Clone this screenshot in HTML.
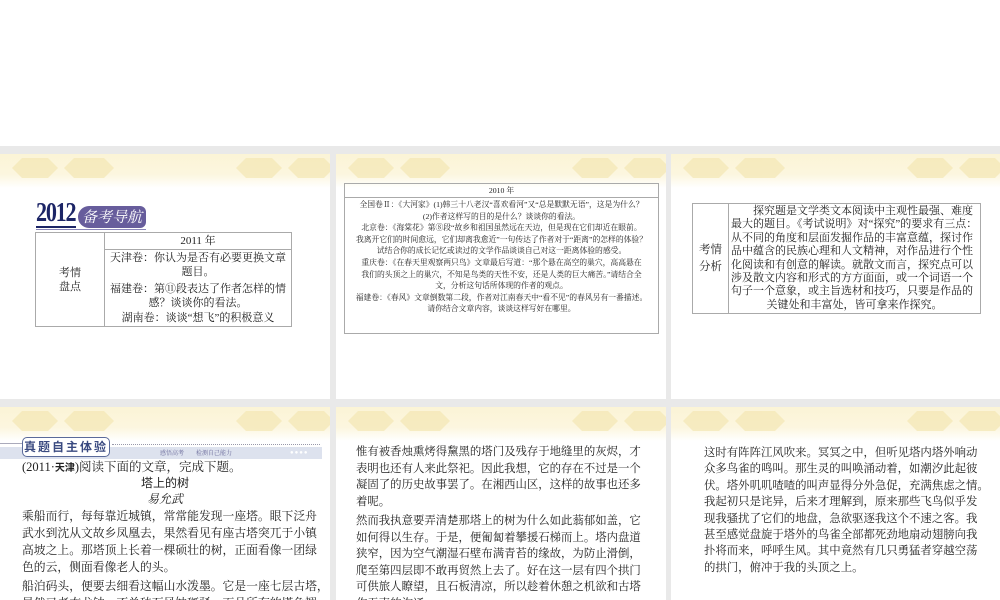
<!DOCTYPE html>
<html><head><meta charset="utf-8"><style>
*{margin:0;padding:0;box-sizing:border-box}
body{width:1000px;height:600px;background:#fff;position:relative;overflow:hidden;font-family:"Liberation Serif","Noto Serif CJK SC","Noto Sans CJK SC",serif;color:#222}
.bg{position:absolute;left:0;top:146px;width:1000px;height:454px;background:#e9e9e9}
.s{position:absolute;background:#fff;overflow:hidden}
.hd{position:absolute;left:0;top:0;width:100%;height:34px;background:linear-gradient(180deg,#fbf4d6 0%,#fcf6df 60%,#fff 100%)}
.hd svg{position:absolute;left:0;top:0}
table{border-collapse:collapse;position:absolute}
td{border:1px solid #aaa;text-align:center;vertical-align:middle;white-space:nowrap}
.p{position:absolute;white-space:nowrap}
</style></head><body>
<div class="bg"></div>

<div class="s" style="left:0;top:154px;width:330px;height:245px">
 <div class="hd"><svg width="330" height="34"><g fill="#f4e7b4" opacity=".7"><polygon points="12,14 22,4 48,4 58,14 48,24 22,24"/><polygon points="64,14 74,4 104,4 114,14 104,24 74,24"/><polygon points="236,14 246,4 272,4 282,14 272,24 246,24"/><polygon points="288,14 298,4 324,4 334,14 324,24 298,24"/></g></svg></div>
 <div style="position:absolute;left:36px;top:44px;font:bold 27px/28px 'Liberation Serif',serif;color:#1c2566;letter-spacing:-1.5px;transform:scaleX(.82);transform-origin:left">2012</div>
 <div style="position:absolute;left:36px;top:72px;width:40px;height:2px;background:#1c2566"></div>
 <div style="position:absolute;left:36px;top:75px;width:110px;height:1px;background:#8a86b8"></div>
 <div style="position:absolute;left:78px;top:52px;width:68px;height:22px;background:#675d9c;border-radius:11px 6px 6px 11px;color:#fff;font:italic 15px/22px 'Noto Serif CJK SC',serif;text-align:center">备考导航</div>
 <table style="left:35px;top:78px;width:257px;font-size:11px;line-height:14px">
  <tr><td rowspan="2" style="width:69px">考情<br>盘点</td><td style="height:17px">2011 年</td></tr>
  <tr><td style="padding:1px 2px 1px">天津卷：你认为是否有必要更换文章<br>题目。<div style="height:3px"></div>福建卷：第⑪段表达了作者怎样的情<br>感？谈谈你的看法。<div style="height:1px"></div>湖南卷：谈谈“想飞”的积极意义</td></tr>
 </table>
</div>

<div class="s" style="left:336px;top:154px;width:330px;height:245px">
 <div class="hd"><svg width="330" height="34"><g fill="#f4e7b4" opacity=".7"><polygon points="12,14 22,4 48,4 58,14 48,24 22,24"/><polygon points="64,14 74,4 104,4 114,14 104,24 74,24"/><polygon points="236,14 246,4 272,4 282,14 272,24 246,24"/><polygon points="288,14 298,4 324,4 334,14 324,24 298,24"/></g></svg></div>
 <table style="left:8px;top:29px;width:315px;height:151px;font-size:7.8px;line-height:11.6px">
  <tr><td style="height:14px">2010 年</td></tr>
  <tr><td style="vertical-align:top;padding:1px 1px">全国卷Ⅱ：《大河家》(1)韩三十八老汉“喜欢看河”又“总是默默无语”，这是为什么？<br>(2)作者这样写的目的是什么？谈谈你的看法。<br>北京卷：《海棠花》第⑧段“故乡和祖国虽然远在天边，但是现在它们却近在眼前。<br>我离开它们的时间愈远，它们却离我愈近”一句传达了作者对于“距离”的怎样的体验？<br>试结合你的成长记忆或读过的文学作品谈谈自己对这一距离体验的感受。<br>重庆卷：《在春天里观察两只鸟》文章最后写道：“那个悬在高空的巢穴，高高悬在<br>我们的头顶之上的巢穴，不知是鸟类的天性不安，还是人类的巨大痛苦。”请结合全<br>文，分析这句话所体现的作者的观点。<br>福建卷：《春风》文章倒数第二段，作者对江南春天中“看不见”的春风另有一番描述。<br>请你结合文章内容，谈谈这样写好在哪里。</td></tr>
 </table>
</div>

<div class="s" style="left:671px;top:154px;width:329px;height:245px">
 <div class="hd"><svg width="330" height="34"><g fill="#f4e7b4" opacity=".7"><polygon points="12,14 22,4 48,4 58,14 48,24 22,24"/><polygon points="64,14 74,4 104,4 114,14 104,24 74,24"/><polygon points="236,14 246,4 272,4 282,14 272,24 246,24"/><polygon points="288,14 298,4 324,4 334,14 324,24 298,24"/></g></svg></div>
 <table style="left:21px;top:49px;width:289px;height:110px;font-size:11px;line-height:13.4px">
  <tr><td style="width:36px;font-size:11.5px;line-height:17px">考情<br>分析</td><td style="padding:1px 2px;text-align:left">　　探究题是文学类文本阅读中主观性最强、难度<br>最大的题目。《考试说明》对“探究”的要求有三点：<br>从不同的角度和层面发掘作品的丰富意蕴，探讨作<br>品中蕴含的民族心理和人文精神，对作品进行个性<br>化阅读和有创意的解读。就散文而言，探究点可以<br>涉及散文内容和形式的方方面面，或一个词语一个<br>句子一个意象，或主旨选材和技巧，只要是作品的<br><span style="display:block;text-align:center">关键处和丰富处，皆可拿来作探究。</span></td></tr>
 </table>
</div>

<div class="s" style="left:0;top:407px;width:330px;height:193px">
 <div class="hd"><svg width="330" height="34"><g fill="#f4e7b4" opacity=".7"><polygon points="12,14 22,4 48,4 58,14 48,24 22,24"/><polygon points="64,14 74,4 104,4 114,14 104,24 74,24"/><polygon points="236,14 246,4 272,4 282,14 272,24 246,24"/><polygon points="288,14 298,4 324,4 334,14 324,24 298,24"/></g></svg></div>
 <div style="position:absolute;left:0;top:40px;width:322px;height:12px;background:#dde2ee"></div>
 <div style="position:absolute;left:0;top:36px;width:22px;height:1px;background:#aab"></div>
 <div style="position:absolute;left:112px;top:37px;width:208px;border-top:1px dotted #99a"></div>
 <div style="position:absolute;left:22px;top:30px;width:88px;height:20px;border:1px solid #5a6a9a;border-radius:5px;background:#fff;color:#3a4a80;font:bold 12px/18px 'Noto Sans CJK SC',sans-serif;text-align:center;letter-spacing:2px">真题自主体验</div>
 <div style="position:absolute;left:160px;top:41px;font-size:6px;color:#6a6a9a">感悟高考　　检测自己能力</div>
 <div style="position:absolute;left:290px;top:43px;font-size:6px;color:#fff;letter-spacing:1px">●●●●</div>
 <div class="p" style="left:22px;top:52px;font-size:12.5px;line-height:16px">(2011·<b style="font-family:'Noto Sans CJK SC',sans-serif;font-size:10px">天津</b>)阅读下面的文章，完成下题。</div>
 <div class="p" style="left:0;width:330px;text-align:center;top:68px;font:12px/16px 'Noto Sans CJK SC',sans-serif">塔上的树</div>
 <div class="p" style="left:0;width:330px;text-align:center;top:84px;font-size:12px;line-height:16px;font-style:italic">易允武</div>
 <div class="p" style="left:22px;top:101px;font-size:11.8px;line-height:17px">乘船而行，每每靠近城镇，常常能发现一座塔。眼下泛舟<br>武水到沈从文故乡凤凰去，果然看见有座古塔突兀于小镇<br>高坡之上。那塔顶上长着一棵硕壮的树，正面看像一团绿<br>色的云，侧面看像老人的头。<div style="height:2px"></div>船泊码头，便要去细看这幅山水泼墨。它是一座七层古塔，<br>显然已老态龙钟，不单砖石风蚀斑驳，而且所有的塔角翘<br>檐都已残损破缺，仅仅剩下三只孤寂的风铃，但已哑然失</div>
</div>

<div class="s" style="left:336px;top:407px;width:330px;height:193px">
 <div class="hd"><svg width="330" height="34"><g fill="#f4e7b4" opacity=".7"><polygon points="12,14 22,4 48,4 58,14 48,24 22,24"/><polygon points="64,14 74,4 104,4 114,14 104,24 74,24"/><polygon points="236,14 246,4 272,4 282,14 272,24 246,24"/><polygon points="288,14 298,4 324,4 334,14 324,24 298,24"/></g></svg></div>
 <div class="p" style="left:20px;top:37px;font-size:11.4px;line-height:16.5px">惟有被香烛熏烤得黧黑的塔门及残存于地缝里的灰烬，才<br>表明也还有人来此祭祀。因此我想，它的存在不过是一个<br>凝固了的历史故事罢了。在湘西山区，这样的故事也还多<br>着呢。<div style="height:3px"></div>然而我执意要弄清楚那塔上的树为什么如此蓊郁如盖，它<br>如何得以生存。于是，便匍匐着攀援石梯而上。塔内盘道<br>狭窄，因为空气潮湿石壁布满青苔的缘故，为防止滑倒，<br>爬至第四层即不敢再贸然上去了。好在这一层有四个拱门<br>可供旅人瞭望，且石板清凉，所以趁着休憩之机欲和古塔<br>作无声的沟通。</div>
</div>

<div class="s" style="left:671px;top:407px;width:329px;height:193px">
 <div class="hd"><svg width="330" height="34"><g fill="#f4e7b4" opacity=".7"><polygon points="12,14 22,4 48,4 58,14 48,24 22,24"/><polygon points="64,14 74,4 104,4 114,14 104,24 74,24"/><polygon points="236,14 246,4 272,4 282,14 272,24 246,24"/><polygon points="288,14 298,4 324,4 334,14 324,24 298,24"/></g></svg></div>
 <div class="p" style="left:33px;top:38px;font-size:11.4px;line-height:16.4px">这时有阵阵江风吹来。冥冥之中，但听见塔内塔外响动<br>众多鸟雀的鸣叫。那生灵的叫唤涌动着，如潮汐此起彼<br>伏。塔外叽叽喳喳的叫声显得分外急促，充满焦虑之情。<br>我起初只是诧异，后来才理解到，原来那些飞鸟似乎发<br>现我骚扰了它们的地盘，急欲驱逐我这个不速之客。我<br>甚至感觉盘旋于塔外的鸟雀全部都死劲地扇动翅膀向我<br>扑将而来，呼呼生风。其中竟然有几只勇猛者穿越空荡<br>的拱门，俯冲于我的头顶之上。</div>
</div>
</body></html>
